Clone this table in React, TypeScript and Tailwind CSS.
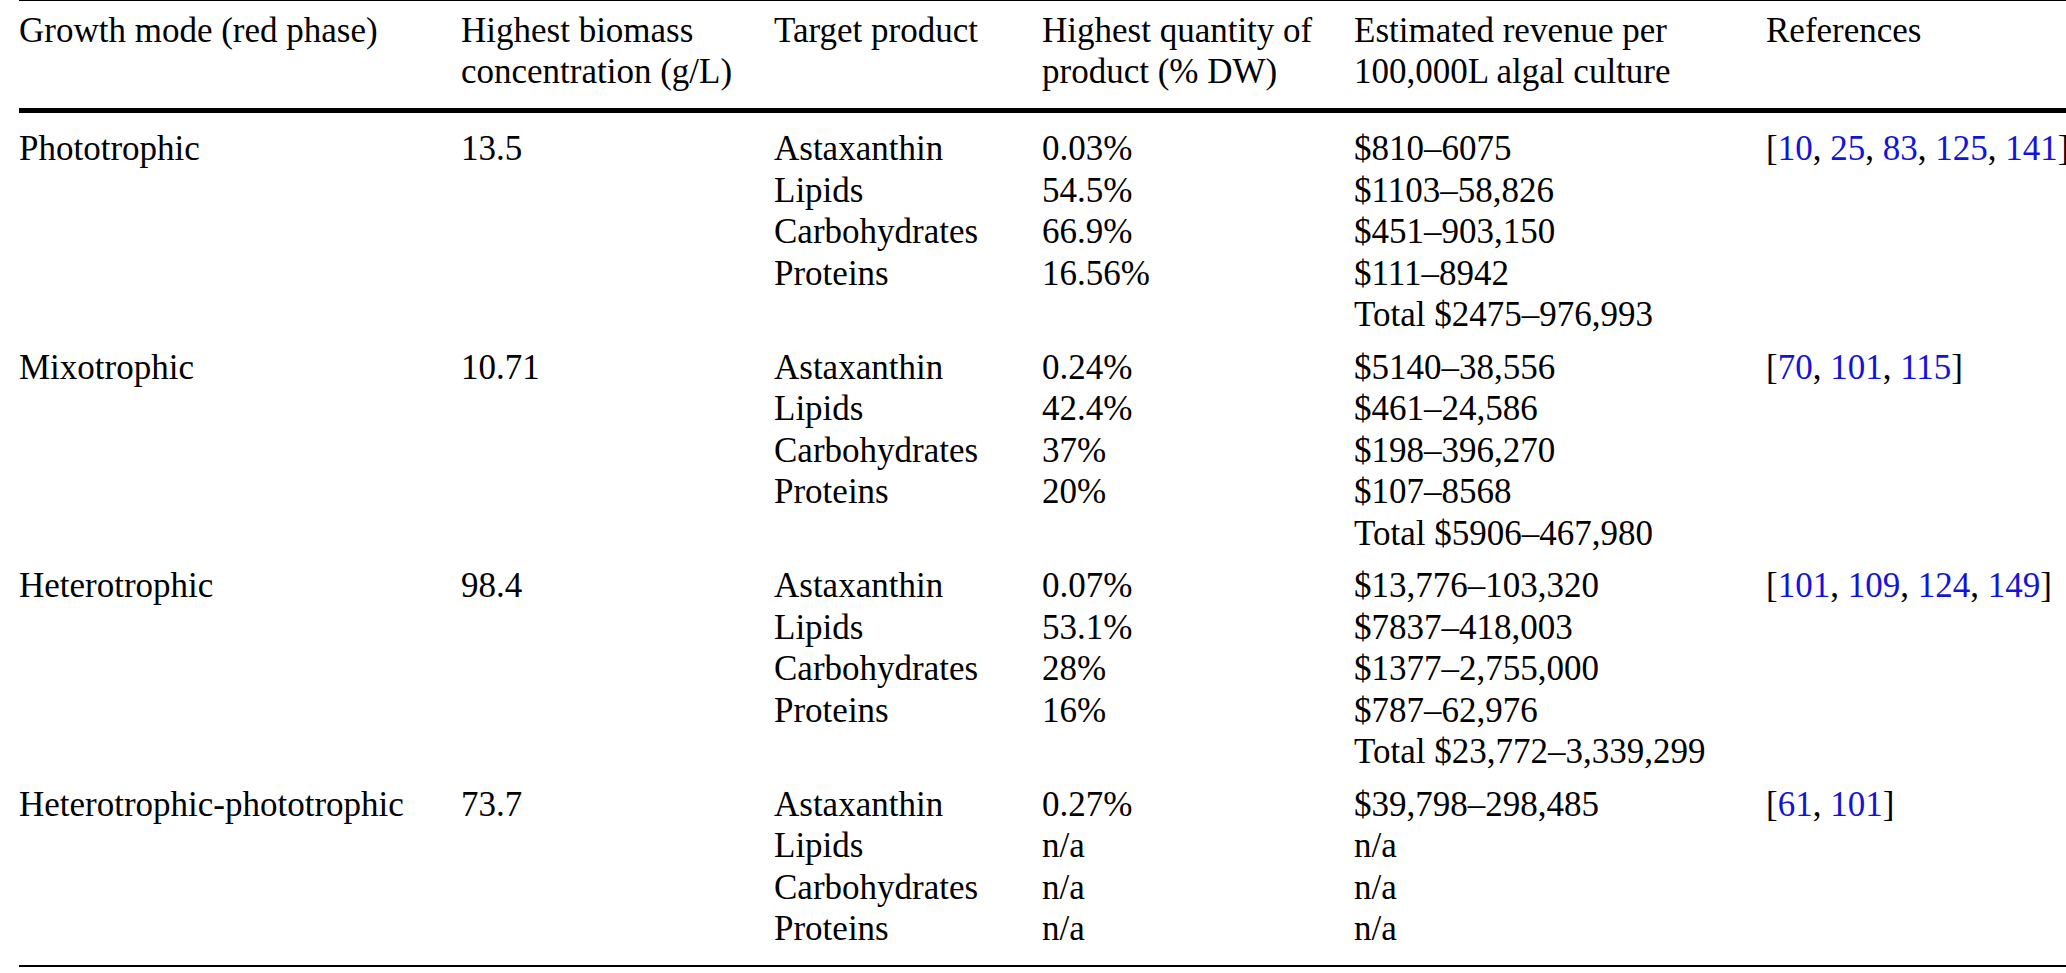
type GrowthRow = {
  mode: string;
  concentration: string;
  products: string[];
  quantities: string[];
  revenues: string[];
  refs: string[];
};

const PRODUCTS = ["Astaxanthin", "Lipids", "Carbohydrates", "Proteins"];

const ROWS: GrowthRow[] = [
  {
    mode: "Phototrophic",
    concentration: "13.5",
    products: PRODUCTS,
    quantities: ["0.03%", "54.5%", "66.9%", "16.56%"],
    revenues: [
      "$810–6075",
      "$1103–58,826",
      "$451–903,150",
      "$111–8942",
      "Total $2475–976,993",
    ],
    refs: ["10", "25", "83", "125", "141"],
  },
  {
    mode: "Mixotrophic",
    concentration: "10.71",
    products: PRODUCTS,
    quantities: ["0.24%", "42.4%", "37%", "20%"],
    revenues: [
      "$5140–38,556",
      "$461–24,586",
      "$198–396,270",
      "$107–8568",
      "Total $5906–467,980",
    ],
    refs: ["70", "101", "115"],
  },
  {
    mode: "Heterotrophic",
    concentration: "98.4",
    products: PRODUCTS,
    quantities: ["0.07%", "53.1%", "28%", "16%"],
    revenues: [
      "$13,776–103,320",
      "$7837–418,003",
      "$1377–2,755,000",
      "$787–62,976",
      "Total $23,772–3,339,299",
    ],
    refs: ["101", "109", "124", "149"],
  },
  {
    mode: "Heterotrophic-phototrophic",
    concentration: "73.7",
    products: PRODUCTS,
    quantities: ["0.27%", "n/a", "n/a", "n/a"],
    revenues: ["$39,798–298,485", "n/a", "n/a", "n/a"],
    refs: ["61", "101"],
  },
];

const GRID =
  "grid grid-cols-[442px_313px_268px_312px_412px_340px] leading-[41.5px] whitespace-nowrap";

function Lines({ items }: { items: string[] }) {
  return (
    <div className="flex flex-col">
      {items.map((item, i) => (
        <span key={i}>{item}</span>
      ))}
    </div>
  );
}

function References({ refs }: { refs: string[] }) {
  return (
    <div>
      [
      {refs.map((ref, i) => (
        <span key={ref}>
          <span className="text-[#1414d8]">{ref}</span>
          {i < refs.length - 1 ? ", " : null}
        </span>
      ))}
      ]
    </div>
  );
}

export default function App() {
  return (
    <div className="w-full h-[973px] overflow-hidden bg-white text-black">
      <div
        className="ml-[19px] w-[2087px] text-[35px]"
        style={{ fontFamily: '"Liberation Serif", "Times New Roman", serif' }}
      >
        <div className={`${GRID} border-t border-black pt-[8.5px] pb-[15.5px]`}>
          <div>Growth mode (red phase)</div>
          <div className="flex flex-col">
            <span>Highest biomass</span>
            <span>concentration (g/L)</span>
          </div>
          <div>Target product</div>
          <div className="flex flex-col">
            <span>Highest quantity of</span>
            <span>product (% DW)</span>
          </div>
          <div className="flex flex-col">
            <span>Estimated revenue per</span>
            <span>100,000L algal culture</span>
          </div>
          <div>References</div>
        </div>
        <div className="h-[5px] bg-black" />
        <div className="flex flex-col gap-[11px] pt-[15px] pb-[15.5px] border-b-2 border-black">
          {ROWS.map((row) => (
            <div key={row.mode} className={GRID}>
              <div>{row.mode}</div>
              <div>{row.concentration}</div>
              <Lines items={row.products} />
              <Lines items={row.quantities} />
              <Lines items={row.revenues} />
              <References refs={row.refs} />
            </div>
          ))}
        </div>
      </div>
    </div>
  );
}
